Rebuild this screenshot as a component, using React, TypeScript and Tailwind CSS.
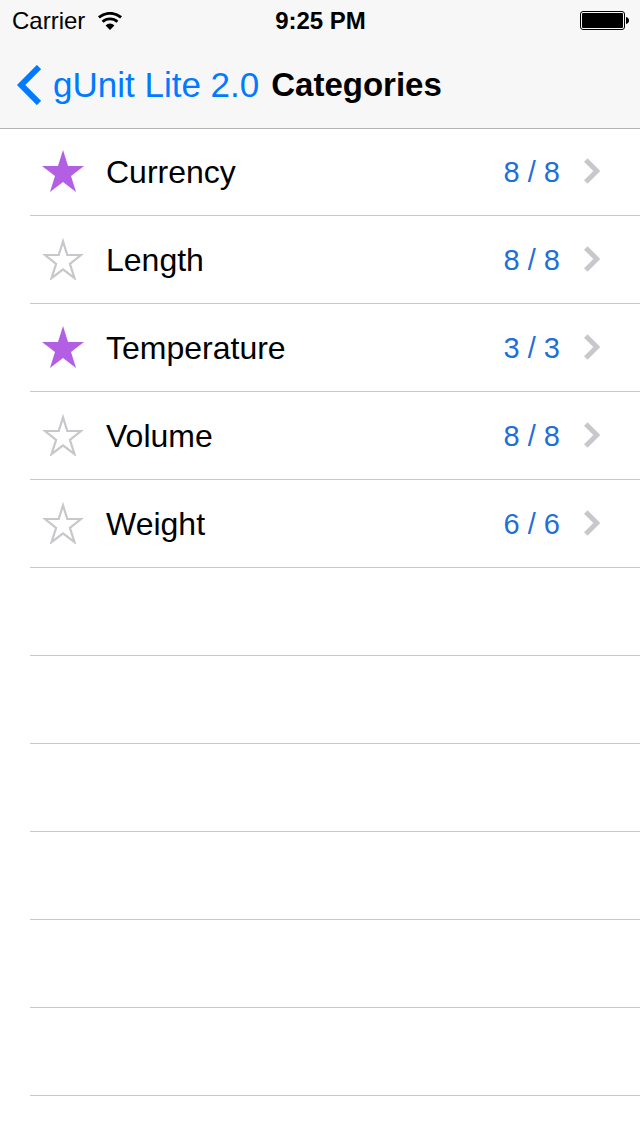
import React, { useState } from 'react'

interface Category {
  name: string
  enabled: number
  total: number
  starred: boolean
}

const INITIAL: Category[] = [
  { name: 'Currency', enabled: 8, total: 8, starred: true },
  { name: 'Length', enabled: 8, total: 8, starred: false },
  { name: 'Temperature', enabled: 3, total: 3, starred: true },
  { name: 'Volume', enabled: 8, total: 8, starred: false },
  { name: 'Weight', enabled: 6, total: 6, starred: false },
]

const EMPTY_ROWS = 6

function WifiIcon() {
  return (
    <svg width="26" height="18" viewBox="0 0 26 18" fill="none" stroke="#000" aria-hidden="true">
      <path d="M1.900 5.400a17 17 0 0 1 22.200 0" strokeWidth="2.800" />
      <path d="M5.600 9.800a11 11 0 0 1 14.800 0" strokeWidth="2.800" />
      <path d="M8.600 13.400a6.200 6.200 0 0 1 8.800 0L13 18z" fill="#000" stroke="none" />
    </svg>
  )
}

function BatteryIcon() {
  return (
    <svg width="49" height="19" viewBox="0 0 49 19" aria-hidden="true">
      <rect x="0.5" y="0.5" width="44" height="18" rx="2.5" fill="none" stroke="#000" />
      <rect x="2" y="2" width="41" height="15" rx="1" />
      <path d="M46 6c2 .3 3 1.700 3 3.500s-1 3.200-3 3.500z" />
    </svg>
  )
}

function StarIcon({ filled }: { filled: boolean }) {
  return filled ? (
    <svg width="42" height="42" viewBox="0 0 42 42" aria-hidden="true">
      <path d="M21 0l5 16h16L29 26l5 16-13-10L8 42l5-16L0 16h16z" fill="#b25fe3" />
    </svg>
  ) : (
    <svg width="42" height="42" viewBox="0 0 42 42" aria-hidden="true">
      <path
        d="M21 3.300L25.300 17h13.700L27.900 25.800 32.500 40.200 21 31.400 9.500 40.200 14.100 25.800 3 17h13.700z"
        fill="none" stroke="#c7c7cc" strokeWidth="2.200" />
    </svg>
  )
}

export default function App() {
  const [categories, setCategories] = useState(INITIAL)

  const toggleStar = (name: string) => {
    setCategories(prev => prev.map(c => (c.name === name ? { ...c, starred: !c.starred } : c)))
  }

  return (
    <div className="min-h-screen bg-white text-black font-['Liberation_Sans',Arial,sans-serif]">
      <header className="relative bg-[#f7f7f7] shadow-[0_1px_0_#b2b2b2]">
        {/* Status bar */}
        <div className="grid grid-cols-3 items-center h-10 pt-0.5 pl-3 pr-[11px] text-2xl">
          <div className="flex items-center gap-3">
            <span>Carrier</span>
            <WifiIcon />
          </div>
          <span className="text-center font-bold">9:25 PM</span>
          <div className="flex justify-end pb-0.5">
            <BatteryIcon />
          </div>
        </div>

        {/* Navigation */}
        <nav className="flex items-center gap-3 h-22 pt-0.5 px-4">
          <a href="#home" className="flex items-center gap-3 text-[35px] leading-10 text-[#007aff]">
            <svg width="25" height="40" viewBox="0 0 25 40" fill="none" stroke="currentColor" aria-hidden="true">
              <path d="M23 2L5.200 20 23 38" strokeWidth="6" />
            </svg>
            gUnit Lite 2.0
          </a>
          <h1 className="text-[33px] leading-10 font-bold">Categories</h1>
        </nav>
      </header>

      <ul className="pl-[30px]">
        {categories.map(c => (
          <li key={c.name} className="flex items-center h-22 border-b border-[#c8c7cc]">
            <button onClick={() => toggleStar(c.name)} aria-pressed={c.starred} aria-label={`Favorite ${c.name}`}
              className="px-3 pb-0.5">
              <StarIcon filled={c.starred} />
            </button>
            <button className="flex flex-1 items-center h-full pl-[10px] pr-10 text-left">
              <span className="flex-1 text-[32px] leading-10">{c.name}</span>
              <span className="text-[29px] leading-10 text-[#1f6fd9]">{c.enabled} / {c.total}</span>
              <svg width="16" height="26" viewBox="0 0 16 26" fill="none" stroke="#c7c7cc" className="ml-6 mb-0.5" aria-hidden="true">
                <path d="M1.800 2L12.800 13 1.800 24" strokeWidth="5" />
              </svg>
            </button>
          </li>
        ))}
        {Array.from({ length: EMPTY_ROWS }, (_, i) => (
          <li key={i} aria-hidden="true" className="h-22 border-b border-[#c8c7cc]" />
        ))}
      </ul>
    </div>
  )
}
